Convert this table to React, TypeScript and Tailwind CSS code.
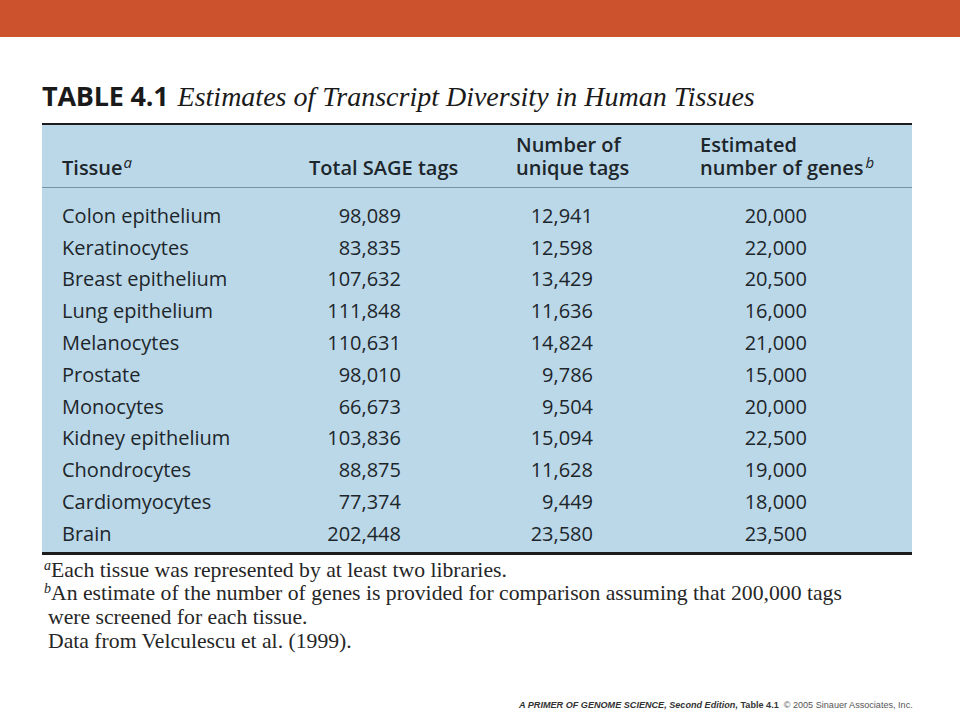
const rows: [string, string, string, string][] = [
  ['Colon epithelium', '98,089', '12,941', '20,000'],
  ['Keratinocytes', '83,835', '12,598', '22,000'],
  ['Breast epithelium', '107,632', '13,429', '20,500'],
  ['Lung epithelium', '111,848', '11,636', '16,000'],
  ['Melanocytes', '110,631', '14,824', '21,000'],
  ['Prostate', '98,010', '9,786', '15,000'],
  ['Monocytes', '66,673', '9,504', '20,000'],
  ['Kidney epithelium', '103,836', '15,094', '22,500'],
  ['Chondrocytes', '88,875', '11,628', '19,000'],
  ['Cardiomyocytes', '77,374', '9,449', '18,000'],
  ['Brain', '202,448', '23,580', '23,500'],
];

const sans = "font-['Open_Sans',sans-serif]";
const serif = "font-['Liberation_Serif',serif]";

export default function App() {
  return (
    <div className="w-[960px] h-[720px] bg-white relative overflow-hidden">
      <div className="h-[37px] bg-[#cc522e]" />

      <div className="pl-[42px] pt-[45px] flex items-baseline">
        <span className={`${sans} font-bold text-[27px] text-[#1a1a1a] tracking-[-0.2px] leading-none`}>TABLE 4.1</span>
        <span className={`${serif} italic text-[28px] text-[#1a1a1a] ml-[9px] leading-none`}>
          Estimates of Transcript Diversity in Human Tissues
        </span>
      </div>

      <div className={`${sans} ml-[42px] mt-[12px] w-[870px] bg-[#bbd8e8] border-t-[2px] border-b-[3px] border-[#1c1c1c] text-[20px] text-[#1d262b]`}>
        <div className="h-[63px] pl-[20px] grid grid-cols-[247px_207px_184px_1fr] items-end pb-[8px] font-semibold leading-[23px] border-b border-[#7c93a0]">
          <div>
            Tissue<sup className="italic font-normal text-[15px] ml-[1px]">a</sup>
          </div>
          <div>Total SAGE tags</div>
          <div>
            Number of
            <br />
            unique tags
          </div>
          <div>
            Estimated
            <br />
            number of genes<sup className="italic font-normal text-[15px] ml-[2px]">b</sup>
          </div>
        </div>
        <div className="pt-[12px] pb-[2px]">
          {rows.map(([t, a, b, c]) => (
            <div key={t} className="h-[31.8px] pl-[20px] grid grid-cols-[247px_207px_184px_1fr] items-center">
              <div>{t}</div>
              <div className="w-[92px] text-right">{a}</div>
              <div className="w-[77px] text-right">{b}</div>
              <div className="w-[107px] text-right">{c}</div>
            </div>
          ))}
        </div>
      </div>

      <div className={`${serif} pl-[44px] pt-[4px] text-[21.7px] leading-[23.7px] text-[#262626]`}>
        <div>
          <sup className="italic text-[14px]">a</sup>Each tissue was represented by at least two libraries.
        </div>
        <div>
          <sup className="italic text-[14px]">b</sup>An estimate of the number of genes is provided for comparison assuming that 200,000 tags
        </div>
        <div className="pl-[4px]">were screened for each tissue.</div>
        <div className="pl-[4px]">Data from Velculescu et al. (1999).</div>
      </div>

      <div className="absolute left-[519px] top-[699px] whitespace-nowrap font-['Liberation_Sans',sans-serif] text-[9.1px] text-[#333]">
        <span className="font-bold italic">A PRIMER OF GENOME SCIENCE, Second Edition, </span>
        <span className="font-bold">Table 4.1</span>
        <span className="ml-[5px] text-[#555]">© 2005 Sinauer Associates, Inc.</span>
      </div>
    </div>
  );
}
